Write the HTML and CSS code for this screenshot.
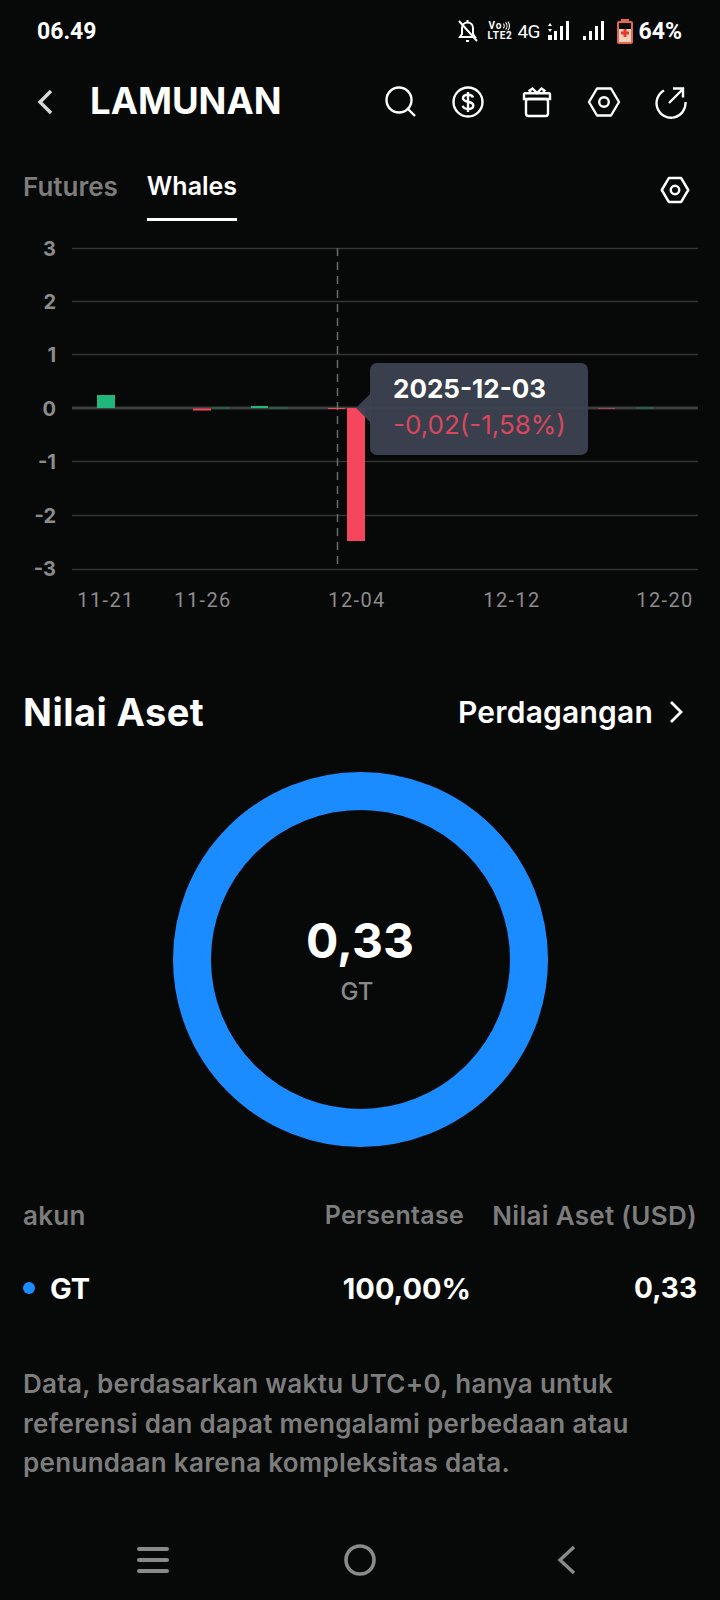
FILE: index.html
```html
<!DOCTYPE html>
<html lang="id">
<head>
  <meta charset="UTF-8">
  <title>LAMUNAN</title>
  <link rel="stylesheet" href="styles.css">
</head>
<body>
  <div class="status">
    <span class="time">06.49</span>
    <div class="status-icons">
      <svg class="ic-bell" width="20" height="24" viewBox="0 0 20 24" fill="none" stroke="#fff" stroke-width="2">
        <path d="M4 9C4 5.500 6.500 3.500 9.500 3.500S15 5.500 15 9v6l2 3H2l2-3z"/>
        <path d="M8 22h3M9.500 1v2M1 2l18 20"/>
      </svg>
      <div class="volte">
        <div class="vo"><span>Vo</span>
          <svg width="9" height="10" viewBox="0 0 9 11" fill="none" stroke="#fff" stroke-width="1.200">
            <path d="M1 3a3.500 3.500 0 0 1 0 5M3.500 1.500a6 6 0 0 1 0 8M6 .5a8.500 8.500 0 0 1 0 10"/>
          </svg>
        </div>
        <span>LTE2</span>
      </div>
      <span class="net">4G</span>
      <svg class="sig1" width="22" height="20" viewBox="0 0 22 20" fill="#fff">
        <path d="M0 5l2-3 2 3zM0 8l2 3 2-3z"/>
        <rect x="0" y="14" width="4" height="5"/>
        <rect x="6" y="10" width="3" height="9"/>
        <rect x="12" y="5" width="3" height="14"/>
        <rect x="18" y="0" width="3" height="19"/>
      </svg>
      <svg class="sig2" width="22" height="20" viewBox="0 0 22 20" fill="#fff">
        <rect x="0" y="15" width="3" height="4"/>
        <rect x="6" y="10" width="3" height="9"/>
        <rect x="12" y="5" width="3" height="14"/>
        <rect x="18" y="0" width="3" height="19"/>
      </svg>
      <svg class="batt" width="16" height="25" viewBox="0 0 16 25">
        <rect x="4" y="0" width="8" height="3" fill="#e2694a"/>
        <rect x="0" y="2" width="16" height="23" rx="2" fill="#e2694a"/>
        <rect x="2" y="4" width="12" height="6" fill="#0a0a0a"/>
        <rect x="2" y="10" width="12" height="13" fill="#f4cfc2"/>
        <path d="M6.500 10h3v2.500H12v3H9.500V18h-3v-2.500H4v-3h2.500z" fill="#e23c2a"/>
      </svg>
      <span class="pct">64%</span>
    </div>
  </div>

  <header class="topbar">
    <svg class="back" width="16" height="26" viewBox="0 0 16 26" fill="none" stroke="#d8d8d8" stroke-width="3.400">
      <path d="M14 2L3 13l11 11"/>
    </svg>
    <h1>LAMUNAN</h1>
    <div class="actions">
      <svg width="34" height="34" viewBox="0 0 34 34" fill="none" stroke="#fff" stroke-width="2.400">
        <circle cx="15" cy="15" r="12.500"/>
        <path d="M24 24l7 7"/>
      </svg>
      <svg width="34" height="34" viewBox="0 0 34 34" fill="none" stroke="#fff" stroke-width="2.400">
        <circle cx="17" cy="17" r="14.500"/>
        <path d="M22 12.500c-.5-1.800-2.500-2.800-5-2.800-2.800 0-5 1.300-5 3.500 0 4.800 10.300 2.300 10.300 7.300 0 2.300-2.300 3.500-5.300 3.500-2.800 0-4.800-1.200-5.300-3.200M17 7v20"/>
      </svg>
      <svg class="gift" width="34" height="34" viewBox="0 0 34 34" fill="none" stroke="#fff" stroke-width="2.400">
        <rect x="6" y="14" width="22" height="17" rx="2.500"/>
        <path d="M4 14V9.500c0-.8.500-1.300 1.300-1.300h23.400c.8 0 1.300.5 1.300 1.300V14z"/>
        <path d="M11 8l-1.500-2.500L12.500 3.500 17 8l4.500-4.500 3 2L23 8"/>
      </svg>
      <svg class="hex" width="34" height="34" viewBox="0 0 34 34" fill="none" stroke="#fff" stroke-width="2.400">
        <path d="M10 3.500h14L32 17l-8 13.500H10L2 17z" stroke-linejoin="round"/>
        <circle cx="17" cy="17" r="4.800"/>
      </svg>
      <svg width="34" height="34" viewBox="0 0 34 34" fill="none" stroke="#fff" stroke-width="2.400">
        <path d="M10 5.500A14.500 14.500 0 1 0 31.500 17"/>
        <path d="M15 18L28 5M19 3.500h10v9"/>
      </svg>
    </div>
  </header>

  <nav class="tabs">
    <span class="tab">Futures</span>
    <span class="tab tab-on">Whales</span>
    <svg class="tab-gear" width="30" height="30" viewBox="0 0 34 34" fill="none" stroke="#fff" stroke-width="2.800">
      <path d="M10 3.500h14L32 17l-8 13.500H10L2 17z" stroke-linejoin="round"/>
      <circle cx="17" cy="17" r="4.800"/>
    </svg>
  </nav>

  <section class="chart">
    <svg width="720" height="385" viewBox="0 235 720 385">
      <g class="grid">
        <path d="M72 248.500H698M72 301.500H698M72 354.500H698M72 461.500H698M72 515.500H698M72 569.500H698"/>
        <path class="zero" d="M72 408H698"/>
      </g>
      <path class="cross" d="M337.500 248V569"/>
      <rect class="up" x="97" y="395" width="18" height="13"/>
      <rect class="down" x="193" y="408.500" width="18" height="2"/>
      <rect class="up-dim" x="212" y="407" width="18" height="2"/>
      <rect class="up" x="251" y="406" width="17" height="2"/>
      <rect class="up-dim" x="270" y="407" width="18" height="2"/>
      <rect class="down" x="328" y="408" width="17" height="1"/>
      <rect class="down" x="347" y="408" width="18" height="133"/>
      <rect class="down thin" x="598" y="408" width="17" height="1"/>
      <rect class="up-dim" x="636" y="407" width="18" height="2"/>
      <g class="y-labels">
        <text x="56" y="256">3</text>
        <text x="56" y="309">2</text>
        <text x="56" y="362">1</text>
        <text x="56" y="416">0</text>
        <text x="56" y="469">-1</text>
        <text x="56" y="523">-2</text>
        <text x="56" y="576">-3</text>
      </g>
      <g class="x-labels">
        <text x="106" y="607">11-21</text>
        <text x="203" y="607">11-26</text>
        <text x="357" y="607">12-04</text>
        <text x="512" y="607">12-12</text>
        <text x="665" y="607">12-20</text>
      </g>
    </svg>
    <div class="tip">
      <div class="tip-date">2025-12-03</div>
      <div class="tip-val">-0,02(-1,58%)</div>
    </div>
  </section>

  <div class="asset-head">
    <h2>Nilai Aset</h2>
    <div class="trade">
      <span>Perdagangan</span>
      <svg width="16" height="24" viewBox="0 0 16 24" fill="none" stroke="#fff" stroke-width="2.800">
        <path d="M3 2l10 10L3 22"/>
      </svg>
    </div>
  </div>

  <div class="donut">
    <div class="donut-center">
      <div class="donut-num">0,33</div>
      <div class="donut-unit">GT</div>
    </div>
  </div>

  <div class="row row-head">
    <span class="c1">akun</span>
    <span class="c2">Persentase</span>
    <span class="c3">Nilai Aset (USD)</span>
  </div>
  <div class="row row-data">
    <span class="c1"><i class="dot"></i>GT</span>
    <span class="c2">100,00%</span>
    <span class="c3">0,33</span>
  </div>

  <p class="note">Data, berdasarkan waktu UTC+0, hanya untuk<br>referensi dan dapat mengalami perbedaan atau<br>penundaan karena kompleksitas data.</p>

  <div class="navbar">
    <svg width="34" height="28" viewBox="0 0 34 28" fill="#8a8a8a">
      <rect x="1" y="1" width="32" height="4" rx="2"/>
      <rect x="1" y="12" width="32" height="4" rx="2"/>
      <rect x="1" y="23" width="32" height="4" rx="2"/>
    </svg>
    <svg class="nav-home" width="34" height="34" viewBox="0 0 34 34" fill="none" stroke="#8a8a8a" stroke-width="3.600">
      <circle cx="17" cy="17" r="14"/>
    </svg>
    <svg width="22" height="30" viewBox="0 0 22 30" fill="none" stroke="#8a8a8a" stroke-width="3.400">
      <path d="M18 2L4 15l14 13"/>
    </svg>
  </div>
</body>
</html>
```

FILE: styles.css
```css
* {
  box-sizing: border-box;
}
body {
  margin: 0;
  width: 720px;
  height: 1600px;
  overflow: hidden;
  background-color: #070808;
  color: #fff;
  font-family: Inter, "Liberation Sans", sans-serif;
}
h1, h2, p {
  margin: 0;
}

.status {
  height: 62px;
  display: flex;
  align-items: center;
  justify-content: space-between;
  padding: 0 38px 0 37px;
}
.time {
  font-family: Roboto, sans-serif;
  font-size: 23px;
  font-weight: 700;
}
.status-icons {
  display: flex;
  align-items: center;
}
.volte {
  display: flex;
  flex-direction: column;
  font-family: Roboto, sans-serif;
  font-size: 10px;
  font-weight: 700;
  line-height: 10px;
  letter-spacing: 0.800px;
  width: 25px;
  margin-left: 10px;
}
.vo {
  display: flex;
  align-items: center;
  padding-left: 1px;
}
.net {
  font-family: Roboto, sans-serif;
  font-size: 19px;
  letter-spacing: -0.800px;
  margin-left: 5px;
}
.sig1 {
  margin-left: 8px;
}
.sig2 {
  margin-left: 13px;
}
.batt {
  margin-left: 12px;
}
.pct {
  font-family: Roboto, sans-serif;
  font-size: 23px;
  font-weight: 700;
  margin-left: 6px;
}

.topbar {
  height: 80px;
  display: flex;
  align-items: center;
  padding: 0 32px 0 37px;
}
.back {
  margin-right: 37px;
}
h1 {
  font-size: 36.500px;
  font-weight: 700;
  margin-bottom: 2px;
}
.actions {
  margin-left: auto;
  display: flex;
  gap: 33px;
}
.gift {
  margin-left: 2px;
}

.tabs {
  height: 79px;
  display: flex;
  align-items: stretch;
  padding: 0 30px 0 23px;
  gap: 29px;
}
.tab {
  font-size: 26px;
  font-weight: 600;
  color: #7d7d7d;
  padding-top: 29px;
}
.tab-on {
  font-size: 25px;
  color: #fff;
  border-bottom: 3px solid #fff;
}
.tab-gear {
  margin-left: auto;
  margin-top: 33px;
}

.chart {
  position: relative;
  height: 385px;
  margin-top: 14px;
}
.chart svg {
  display: block;
}
.grid path {
  stroke: #333535;
  stroke-width: 1.500;
  fill: none;
}
.grid .zero {
  stroke: #3c3e3e;
  stroke-width: 3;
}
.cross {
  stroke: #6a6a6a;
  stroke-width: 1.500;
  stroke-dasharray: 8 6;
}
.up {
  fill: #20b77c;
}
.up-dim {
  fill: #2c5c4b;
}
.down {
  fill: #f6465d;
}
.thin {
  opacity: 0.6;
}
.y-labels text {
  fill: #8c8c8c;
  font-size: 20px;
  font-weight: 700;
  text-anchor: end;
}
.x-labels text {
  fill: #8c8c8c;
  font-family: Roboto, sans-serif;
  font-size: 20px;
  letter-spacing: 1.400px;
  text-anchor: middle;
}
.tip {
  position: absolute;
  left: 370px;
  top: 128px;
  width: 218px;
  height: 92px;
  padding: 8px 0 0 23px;
  border-radius: 7px;
  background-color: rgba(60, 66, 80, 0.95);
  font-size: 26px;
  line-height: 36px;
}
.tip::before {
  content: "";
  position: absolute;
  left: -14px;
  top: 30px;
  border: 15px solid transparent;
  border-left: 0;
  border-right-color: rgba(60, 66, 80, 0.95);
}
.tip-date {
  font-weight: 700;
}
.tip-val {
  color: #d9475c;
}

.asset-head {
  height: 60px;
  margin-top: 62px;
  display: flex;
  align-items: center;
  justify-content: space-between;
  padding: 0 36px 0 23px;
}
h2 {
  font-size: 38px;
  font-weight: 700;
  letter-spacing: 0.450px;
}
.trade {
  display: flex;
  align-items: center;
  gap: 15px;
  font-size: 30px;
  font-weight: 600;
  letter-spacing: 0.200px;
}

.donut {
  width: 375px;
  height: 375px;
  margin: 30px auto 0;
  border: 38px solid #1b8cff;
  border-radius: 50%;
  display: flex;
  align-items: center;
  justify-content: center;
}
.donut-center {
  text-align: center;
  margin-bottom: 1px;
}
.donut-num {
  font-size: 48px;
  font-weight: 700;
  line-height: 60px;
}
.donut-unit {
  font-size: 24px;
  font-weight: 500;
  color: #8a8a8a;
  line-height: 30px;
  margin-top: 6px;
  padding-right: 6px;
}

.row {
  display: flex;
  align-items: center;
  padding: 0 23px;
}
.row-head {
  margin-top: 48px;
  height: 40px;
  font-size: 26px;
  font-weight: 600;
  letter-spacing: 0.300px;
  color: #7d7d7d;
}
.row-data {
  margin-top: 33px;
  height: 40px;
  font-size: 29px;
  font-weight: 700;
}
.c1 {
  flex: 1;
  display: flex;
  align-items: center;
}
.c2 {
  width: 150px;
  text-align: right;
}
.row-head .c2 {
  font-size: 25px;
}
.c3 {
  width: 233px;
  text-align: right;
}
.row-data .c3 {
  width: 226px;
  font-size: 28px;
}
.dot {
  width: 12px;
  height: 12px;
  border-radius: 50%;
  background-color: #1b8cff;
  margin-right: 15px;
}

.note {
  margin: 56px 23px 0;
  font-size: 26px;
  font-weight: 600;
  line-height: 39.500px;
  letter-spacing: 0.300px;
  color: #7d7d7d;
}

.navbar {
  margin-top: 60px;
  display: flex;
  align-items: center;
  justify-content: space-between;
  padding: 0 142px 0 136px;
}
.nav-home {
  margin-right: 7px;
}
```
